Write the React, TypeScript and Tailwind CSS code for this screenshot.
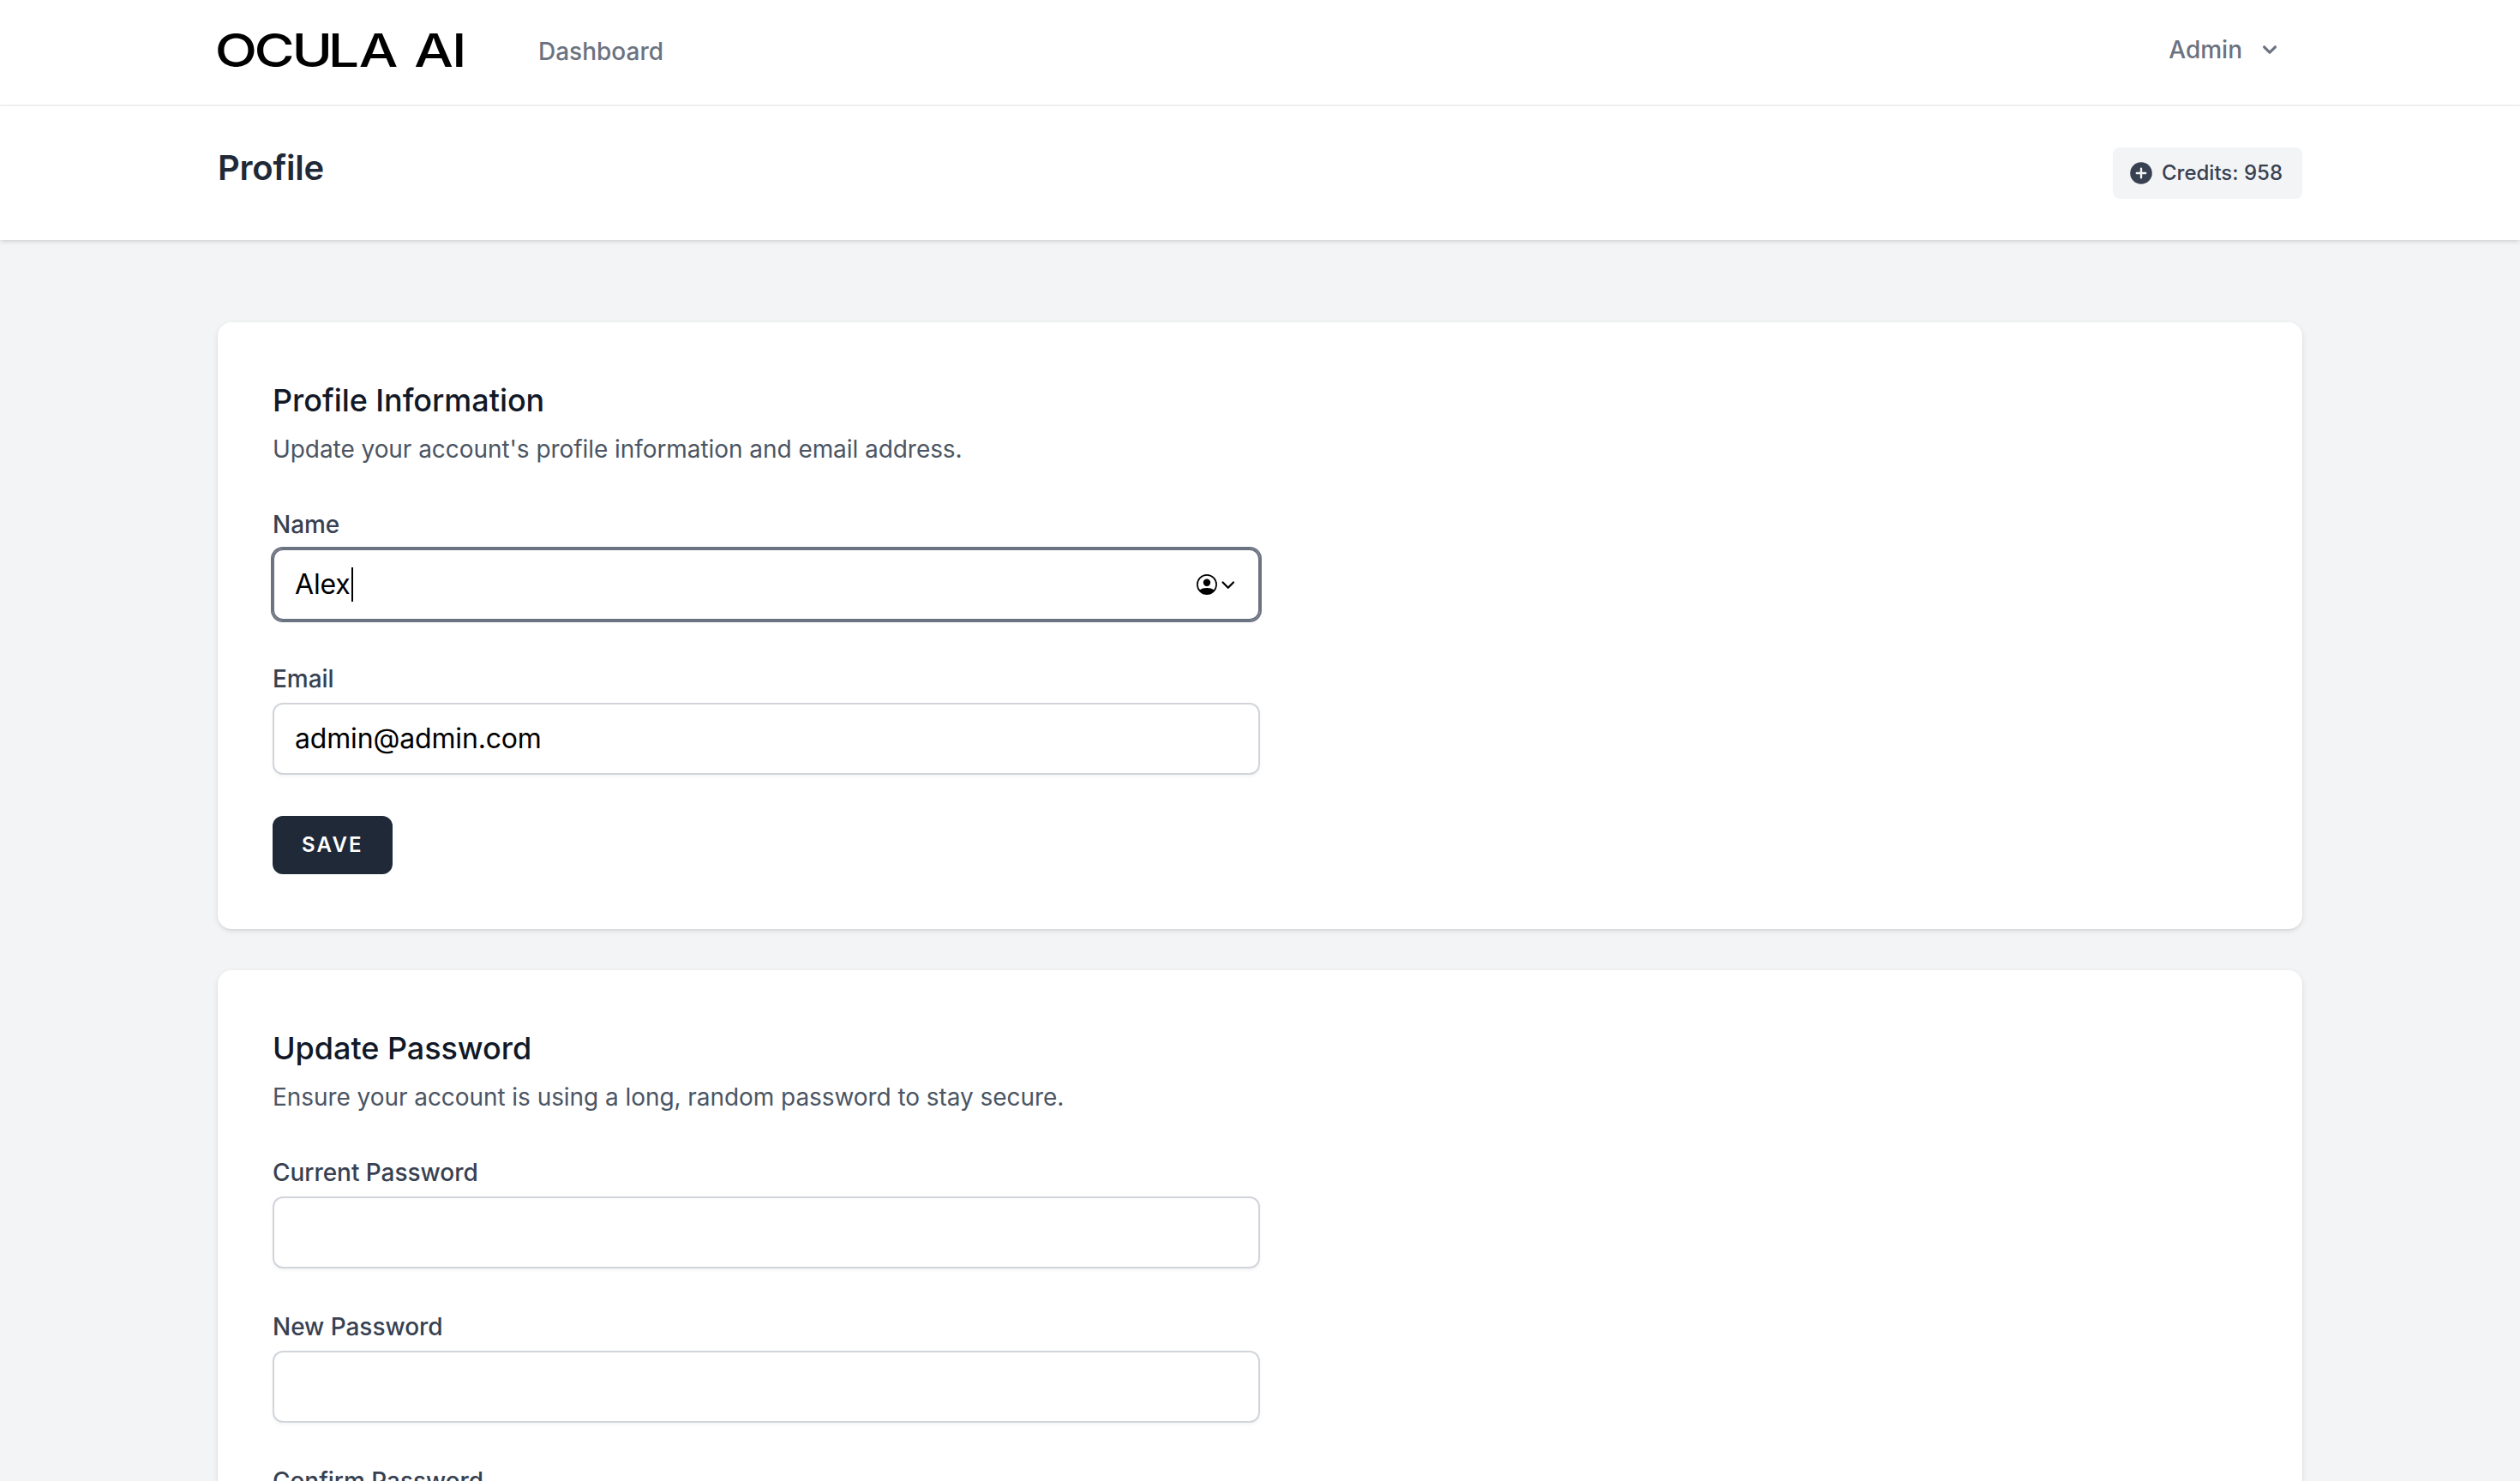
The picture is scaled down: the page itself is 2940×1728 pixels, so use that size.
import type { ReactNode } from "react"
import { clsx } from "clsx"

export default function App() {
  return (
    <div className="h-[1728px] overflow-hidden bg-[#f3f4f6] font-['Inter',sans-serif] text-black antialiased">
      <NavBar />
      <PageHeader title="Profile" credits={958} />

      <main className="mx-auto flex w-[2432px] flex-col gap-12 pt-24">
        <Section
          title="Profile Information"
          description="Update your account's profile information and email address."
        >
          <Field label="Name" value="Alex" focused />
          <Field label="Email" value="admin@admin.com" />
          <PrimaryButton>Save</PrimaryButton>
        </Section>

        <Section
          title="Update Password"
          description="Ensure your account is using a long, random password to stay secure."
        >
          <Field label="Current Password" />
          <Field label="New Password" />
          <Field label="Confirm Password" />
          <PrimaryButton>Save</PrimaryButton>
        </Section>
      </main>
    </div>
  )
}

function NavBar() {
  return (
    <nav className="h-[124px] border-b-2 border-[#f3f4f6] bg-white">
      <div className="mx-auto flex h-full w-[2432px] items-center justify-between">
        <div className="flex h-full items-center">
          <Logo />
          <a className="mb-0.5 ml-[84px] text-[28px] leading-10 font-medium text-[#6b7280]">Dashboard</a>
        </div>
        <button className="mr-[22px] mb-1.5 flex items-center text-[28px] leading-10 font-medium text-[#6b7280]">
          Admin
          <svg className="ml-4 size-8" viewBox="0 0 20 20" fill="currentColor">
            <path
              fillRule="evenodd"
              clipRule="evenodd"
              d="M5.293 7.293a1 1 0 011.414 0L10 10.586l3.293-3.293a1 1 0 111.414 1.414l-4 4a1 1 0 01-1.414 0l-4-4a1 1 0 010-1.414z"
            />
          </svg>
        </button>
      </div>
    </nav>
  )
}

// wide wordmark, every letter gets its own x
function Logo() {
  return (
    <svg className="mb-1 h-14 w-[290px] overflow-visible" viewBox="0 0 290 56" fill="#000">
      <text
        x="-2.8 35.5 72 107.3 137.4 170 191 227.6"
        y="46.5"
        transform="scale(1.2 1)"
        fontSize="53.6"
        fontWeight="500"
      >
        OCULA AI
      </text>
    </svg>
  )
}

function PageHeader({ title, credits }: { title: string; credits: number }) {
  return (
    <header className="relative bg-white py-12 shadow-[0_2px_6px_0_rgb(0_0_0/0.1),0_2px_4px_-2px_rgb(0_0_0/0.1)]">
      <div className="mx-auto flex w-[2432px] items-start justify-between">
        <h2 className="-mt-px text-[40px] leading-[50px] font-semibold tracking-[-0.25px] text-[#1f2937]">{title}</h2>
        <div className="flex h-[60px] w-[221px] items-center rounded-lg bg-[#f3f4f6] pl-[17px] text-2xl font-medium whitespace-nowrap text-[#374151]">
          <svg className="mr-2 size-8 shrink-0" viewBox="0 0 20 20" fill="currentColor">
            <path
              fillRule="evenodd"
              clipRule="evenodd"
              d="M10 18a8 8 0 100-16 8 8 0 000 16zm.75-11.25a.75.75 0 00-1.5 0v2.5h-2.5a.75.75 0 000 1.5h2.5v2.5a.75.75 0 001.5 0v-2.5h2.5a.75.75 0 000-1.5h-2.5v-2.5z"
            />
          </svg>
          Credits: {credits}
        </div>
      </div>
    </header>
  )
}

interface SectionProps {
  title: string
  description: string
  children: ReactNode
}

function Section({ title, description, children }: SectionProps) {
  return (
    <section className="rounded-2xl bg-white p-16 shadow-[0_2px_6px_0_rgb(0_0_0/0.1),0_2px_4px_-2px_rgb(0_0_0/0.1)]">
      <div className="w-[1152px]">
        <h3 className="-mt-px text-4xl leading-[56px] font-medium tracking-[-0.05px] text-[#111827]">{title}</h3>
        <p className="mt-[9px] text-[28px] leading-10 tracking-[-0.06px] text-[#4b5563]">{description}</p>
        <div className="mt-12 flex flex-col items-start gap-12">{children}</div>
      </div>
    </section>
  )
}

interface FieldProps {
  label: string
  value?: string
  focused?: boolean
}

function Field({ label, value, focused }: FieldProps) {
  return (
    <div className="w-full">
      <div className="text-[28px] leading-10 font-medium tracking-[-0.04px] text-[#374151]">{label}</div>
      <div
        className={clsx(
          "mt-2 flex h-[84px] items-center rounded-xl border-2 px-6 text-[32px] leading-[48px] tracking-[-0.16px]",
          focused
            ? "border-[#6b7280] shadow-[0_0_0_2px_#6b7280,0_2px_4px_0_rgb(0_0_0/0.05)]"
            : "border-[#d1d5db] shadow-[0_2px_4px_0_rgb(0_0_0/0.05)]",
        )}
      >
        {value}
        {focused && (
          <>
            <span className="ml-px h-10 w-0.5 bg-black" />
            <AutofillIcon />
          </>
        )}
      </div>
    </div>
  )
}

// contact autofill marker shown at the end of the focused input
function AutofillIcon() {
  return (
    <svg className="ml-auto h-6 w-12" viewBox="0 0 48 24" fill="none">
      <circle cx="12" cy="12" r="11.1" stroke="#000" strokeWidth="1.7" />
      <circle cx="12" cy="9.7" r="4.2" fill="#000" />
      <path d="M3.4 18.6C5.6 16.8 8.6 16 12 16s6.4.8 8.6 2.6A11.5 11.5 0 0 1 12 23.4a11.5 11.5 0 0 1-8.6-4.8z" fill="#000" />
      <path d="M30.6 9.5l6.2 6.2L43 9.5" stroke="#000" strokeWidth="2.3" strokeLinecap="round" strokeLinejoin="round" />
    </svg>
  )
}

function PrimaryButton({ children }: { children: ReactNode }) {
  return (
    <button className="flex h-[68px] w-[140px] items-center rounded-xl border-2 border-[#1f2937] bg-[#1f2937] px-8 text-2xl leading-8 font-semibold tracking-[2.2px] text-white uppercase">
      {children}
    </button>
  )
}
